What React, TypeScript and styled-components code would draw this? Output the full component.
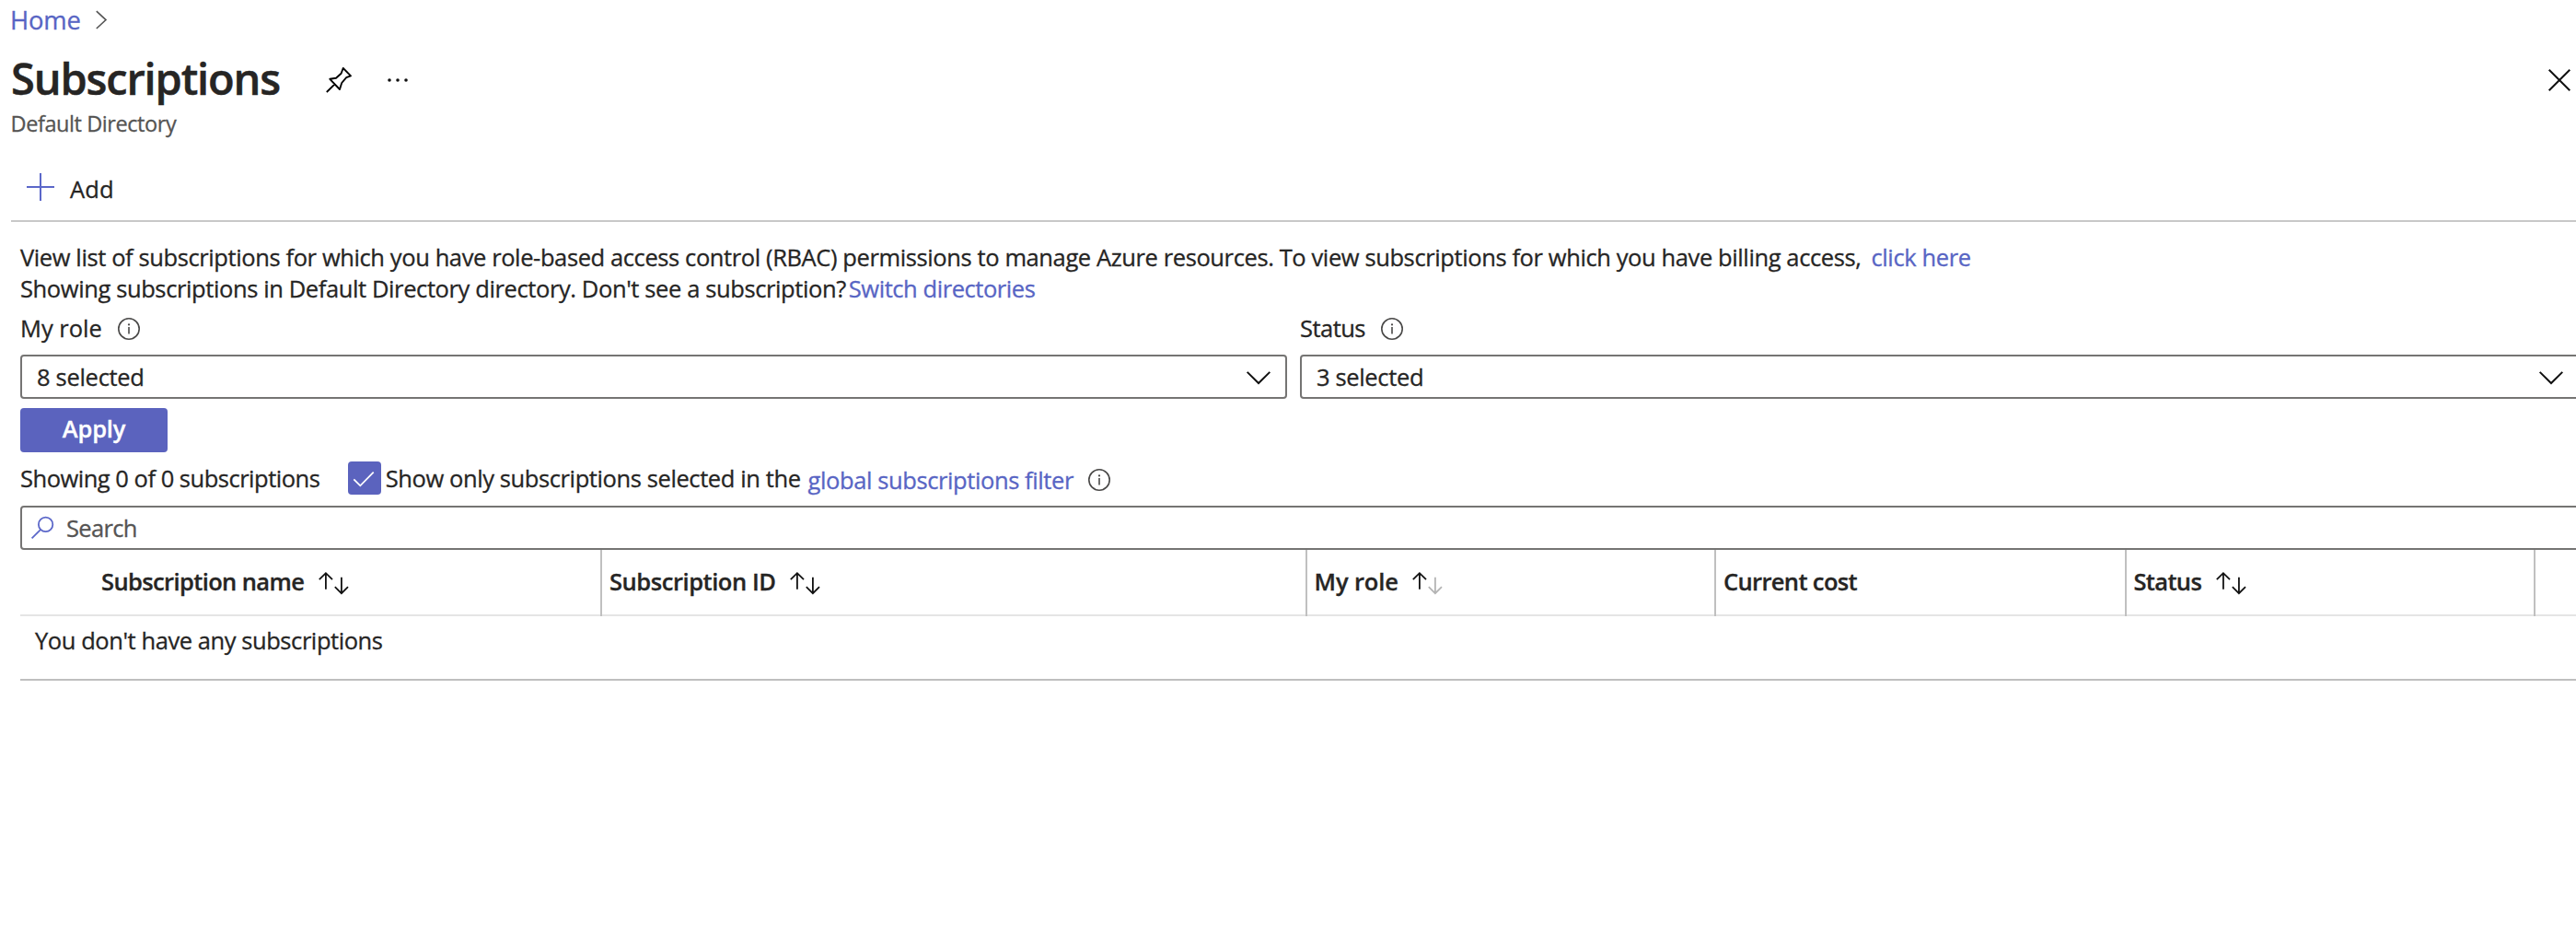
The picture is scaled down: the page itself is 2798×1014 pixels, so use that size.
import React from 'react';
import styled, { createGlobalStyle } from 'styled-components';

const ink = '#262524';
const accent = '#5b63be';
const link = '#5865c4';

const GlobalStyle = createGlobalStyle`
  * { box-sizing: border-box; }
  html, body { margin: 0; background: #fff; overflow: hidden; }
  body { font-family: "Open Sans", "Noto Sans", sans-serif; color: ${ink}; }
  svg { display: block; flex: none; overflow: visible; }
`;

const Page = styled.div`
  width: 2802px;
  height: 1014px;
  overflow: hidden;
`;

const Text = styled.span<{ $track?: number; $size?: number; $bold?: boolean }>`
  font-size: ${(p) => p.$size ?? 25.5}px;
  font-weight: ${(p) => (p.$bold ? 600 : 400)};
  letter-spacing: ${(p) => p.$track ?? -0.4}px;
  line-height: 34px;
  white-space: nowrap;
  -webkit-text-stroke: 0.3px currentColor;
`;

const Link = styled(Text).attrs({ as: 'a' })`
  color: ${link};
  cursor: pointer;
`;

const Breadcrumb = styled.nav`
  display: flex;
  align-items: center;
  gap: 15px;
  height: 42px;
  padding: 2px 0 0 11px;
`;

const TitleBar = styled.header`
  display: flex;
  align-items: center;
  height: 64px;
  margin-top: 11px;
  padding: 0 10px 0 12px;
`;

const Title = styled.h1`
  margin: 0 50px 0 0;
  font-size: 47px;
  font-weight: 600;
  letter-spacing: -1.15px;
  line-height: 64px;
  -webkit-text-stroke: 0.5px currentColor;
`;

const IconButton = styled.button<{ $gap?: number; $end?: boolean }>`
  display: flex;
  padding: 4px 0 0;
  border: 0;
  background: none;
  color: #111;
  margin-right: ${(p) => p.$gap ?? 0}px;
  margin-left: ${(p) => (p.$end ? 'auto' : 0)};
`;

const Subtitle = styled.div`
  height: 32px;
  margin: 1px 0 0 11.5px;
  color: #555453;
  font-size: 23.5px;
  line-height: 32px;
  letter-spacing: -0.42px;
  -webkit-text-stroke: 0.3px currentColor;
`;

const Toolbar = styled.div`
  display: flex;
  align-items: center;
  gap: 17px;
  height: 91px;
  margin-left: 12px;
  padding: 38px 0 17px 17px;
  border-bottom: 2px solid #c8c8c8;
  svg { margin-bottom: 4px; }
`;

const Content = styled.main`
  display: flex;
  flex-direction: column;
  padding: 21px 0 0 22px;
`;

const Paragraph = styled.p<{ $gap: number }>`
  display: flex;
  gap: ${(p) => p.$gap}px;
  margin: 0;
`;

const Filters = styled.div`
  display: grid;
  grid-template-columns: 1376px 1390px;
  gap: 14px;
  margin-top: 9px;
`;

const Field = styled.div`
  display: flex;
  flex-direction: column;
  gap: 12px;
`;

const FieldLabel = styled.label`
  display: flex;
  align-items: center;
  gap: 17px;
  height: 34px;
  svg { margin-top: 2px; }
`;

const Box = styled.div`
  display: flex;
  align-items: center;
  height: 48px;
  border: 2px solid #757473;
  border-radius: 4px;
`;

const Dropdown = styled(Box)`
  justify-content: space-between;
  padding: 0 16px;
  svg { margin-top: 2px; }
`;

const ApplyButton = styled.button`
  display: flex;
  align-items: center;
  justify-content: center;
  width: 160px;
  height: 48px;
  margin-top: 10px;
  padding: 0 0 4px;
  border: 0;
  border-radius: 4px;
  background: ${accent};
  color: #fff;
  font-family: inherit;
`;

const Summary = styled.div`
  display: flex;
  align-items: center;
  height: 36px;
  margin-top: 10px;
`;

const Checkbox = styled.span`
  width: 36px;
  height: 36px;
  margin: 0 4.7px 0 30.6px;
  border-radius: 4px;
  background: ${accent};
`;

const Lowered = styled.span<{ $before: number }>`
  display: flex;
  padding-top: 4px;
  margin-left: ${(p) => p.$before}px;
`;

const SearchBox = styled(Box)`
  gap: 14px;
  margin-top: 12px;
  padding-left: 10px;
  color: #555453;
`;

const HeaderRow = styled.div`
  display: grid;
  grid-template-columns: 632px 766px 444px 446px 444px 1fr;
  height: 72px;
`;

const Column = styled.div`
  display: grid;
  grid-template-columns: 1fr 2px;
  &:last-child { grid-template-columns: 1fr; }
`;

const HeaderCell = styled.div<{ $inset?: number }>`
  display: flex;
  align-items: center;
  gap: 15.5px;
  padding: 0 0 2px ${(p) => p.$inset ?? 8}px;
  border-bottom: 2px solid #e5e5e5;
  svg { margin-top: 4px; }
`;

const Divider = styled.i`
  background: #c0c0c0;
`;

const EmptyRow = styled.div`
  height: 70px;
  padding: 9px 0 0 16px;
  border-bottom: 2px solid #bfbfbf;
`;

const InfoIcon = () => (
  <svg width="24" height="24" viewBox="0 0 24 24" fill="none" stroke="#4a4948" strokeWidth="1.6">
    <circle cx="12" cy="12" r="11.2" />
    <path d="M12 10v7.6" />
    <circle cx="12" cy="7.4" r="1.1" fill="#4a4948" stroke="none" />
  </svg>
);

const ChevronDown = () => (
  <svg width="26" height="14" viewBox="0 0 26 14" fill="none" stroke="#111" strokeWidth="2">
    <path d="M.7.9 13 13 25.3.9" />
  </svg>
);

const SortIcon = ({ ascending }: { ascending?: boolean }) => (
  <svg width="33" height="24" viewBox="0 0 33 24" fill="none" stroke="#111" strokeWidth="1.8">
    <path d="M7.9 18.8V1.2M.8 8.2l7.1-7 7.1 7" />
    <path d="M24.9 5.8v17.4M17.8 16.2l7.1 7 7.1-7" stroke={ascending ? '#b4b4b4' : '#111'} />
  </svg>
);

type ColumnSpec = { label: string; track: number; inset?: number; sort?: 'both' | 'asc' };

const columns: ColumnSpec[] = [
  { label: 'Subscription name', track: -0.62, inset: 88, sort: 'both' },
  { label: 'Subscription ID', track: -0.45, sort: 'both' },
  { label: 'My role', track: -0.1, inset: 7.5, sort: 'asc' },
  { label: 'Current cost', track: -0.64 },
  { label: 'Status', track: -0.66, inset: 7.5, sort: 'both' },
];

export default function App() {
  return (
    <Page>
      <GlobalStyle />
      <Breadcrumb>
        <Link $size={27.4} $track={-0.17}>Home</Link>
        <svg width="14" height="20" viewBox="0 0 14 20" fill="none" stroke="#555" strokeWidth="1.6">
          <path d="M1.8.2 12 9.6 1.8 19" />
        </svg>
      </Breadcrumb>
      <TitleBar>
        <Title>Subscriptions</Title>
        <IconButton $gap={38}>
          <svg width="28" height="28" viewBox="0 0 28 28" fill="none" stroke="#000" strokeWidth="1.9" strokeLinejoin="round">
            <path d="M18.7 1 27 9.3 22.2 11.2 17.2 17 15 24 4.3 12.8 11 11.8 16.6 6.8ZM9.6 18.4.8 27" />
          </svg>
        </IconButton>
        <IconButton>
          <svg width="24" height="6" viewBox="0 0 24 6" fill="#111">
            <circle cx="3" cy="3" r="1.8" />
            <circle cx="12" cy="3" r="1.8" />
            <circle cx="21" cy="3" r="1.8" />
          </svg>
        </IconButton>
        <IconButton $end>
          <svg width="24" height="24" viewBox="0 0 24 24" fill="none" stroke="#111" strokeWidth="2">
            <path d="M.7.7l22.6 22.6M23.3.7.7 23.3" />
          </svg>
        </IconButton>
      </TitleBar>
      <Subtitle>Default Directory</Subtitle>
      <Toolbar>
        <svg width="30" height="30" viewBox="0 0 30 30" stroke="#5b67c9" strokeWidth="2">
          <path d="M15 0v30M0 15h30" />
        </svg>
        <Text $track={0.15}>Add</Text>
      </Toolbar>
      <Content>
        <Paragraph $gap={11}>
          <Text $track={-0.394}>
            View list of subscriptions for which you have role-based access control (RBAC) permissions to manage Azure
            resources. To view subscriptions for which you have billing access,
          </Text>
          <Link $track={-0.37}>click here</Link>
        </Paragraph>
        <Paragraph $gap={3}>
          <Text $track={-0.39}>
            Showing subscriptions in Default Directory directory. Don't see a subscription?
          </Text>
          <Link $track={-0.44}>Switch directories</Link>
        </Paragraph>
        <Filters>
          <Field>
            <FieldLabel><Text $track={0}>My role</Text><InfoIcon /></FieldLabel>
            <Dropdown><Text $track={-0.3}>8 selected</Text><ChevronDown /></Dropdown>
          </Field>
          <Field>
            <FieldLabel><Text $track={-0.52}>Status</Text><InfoIcon /></FieldLabel>
            <Dropdown><Text $track={-0.35}>3 selected</Text><ChevronDown /></Dropdown>
          </Field>
        </Filters>
        <ApplyButton><Text $bold $track={-0.21}>Apply</Text></ApplyButton>
        <Summary>
          <Text $track={-0.49}>Showing 0 of 0 subscriptions</Text>
          <Checkbox>
            <svg width="36" height="36" viewBox="0 0 36 36" fill="none" stroke="#fff" strokeWidth="1.8">
              <path d="M6.3 19.3l7 7L27.7 11.7" />
            </svg>
          </Checkbox>
          <Text $track={-0.4}>Show only subscriptions selected in the</Text>
          <Lowered $before={8}><Link>global subscriptions filter</Link></Lowered>
          <Lowered $before={16}><InfoIcon /></Lowered>
        </Summary>
        <SearchBox>
          <svg width="24" height="24" viewBox="0 0 24 24" fill="none" stroke="#5b67c9" strokeWidth="1.8">
            <circle cx="15.6" cy="8.4" r="7.7" />
            <path d="M10.2 13.8.6 23.4" />
          </svg>
          <Text $track={-0.66}>Search</Text>
        </SearchBox>
        <HeaderRow>
          {columns.map((c) => (
            <Column key={c.label}>
              <HeaderCell $inset={c.inset}>
                <Text $bold $track={c.track}>{c.label}</Text>
                {c.sort && <SortIcon ascending={c.sort === 'asc'} />}
              </HeaderCell>
              <Divider />
            </Column>
          ))}
          <Column><HeaderCell /></Column>
        </HeaderRow>
        <EmptyRow><Text $track={-0.43}>You don't have any subscriptions</Text></EmptyRow>
      </Content>
    </Page>
  );
}
